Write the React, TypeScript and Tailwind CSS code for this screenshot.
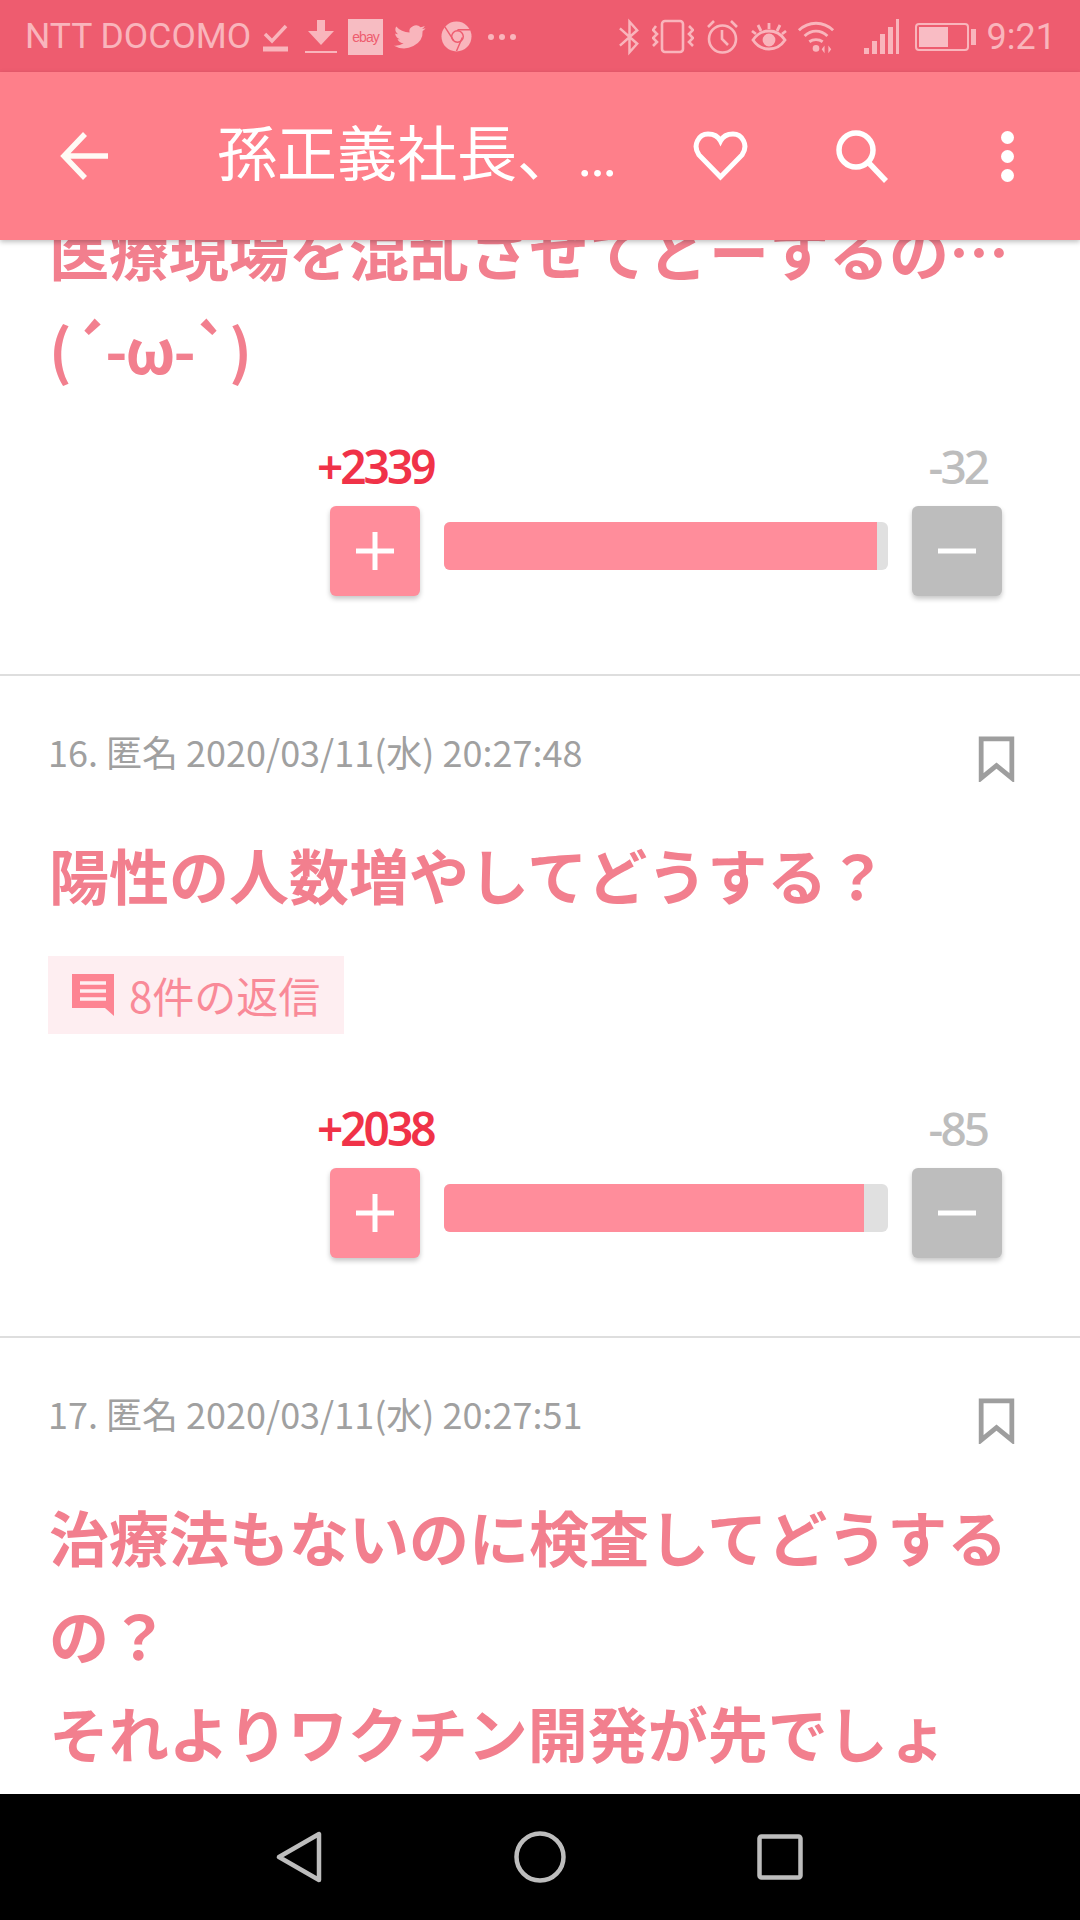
const FONT = "font-['Noto_Sans_CJK_JP','Noto_Sans',sans-serif]";

function StatusBar() {
  return (
    <div className="flex h-[72px] shrink-0 items-center bg-[#ee5c6f] pl-[25px] pr-[24px] pt-[1px] text-[#f9b5bc]">
      <span className="w-[228px] shrink-0 text-[35.5px] leading-none font-['Roboto',sans-serif] whitespace-nowrap">NTT DOCOMO</span>
      <svg width="25" height="32" viewBox="0 0 25 32" className="ml-[10px]" fill="none" stroke="currentColor">
        <path d="M2 13 L9 20 L23 5" strokeWidth="3.500" />
        <path d="M0 28 H25" strokeWidth="5" />
      </svg>
      <svg width="32" height="35" viewBox="0 0 32 35" className="ml-[17px]" fill="currentColor">
        <path d="M12 1 H20 V12 H29 L16 26 L3 12 H12 Z" />
        <rect x="0" y="32" width="32" height="2" />
      </svg>
      <div className="ml-[11px] flex h-[36px] w-[35px] items-center justify-center overflow-hidden bg-[#f7bcc2] text-[14px] leading-none tracking-[-1px] text-[#ee5c6f] font-['Liberation_Sans',sans-serif]">ebay</div>
      <svg width="34" height="30" viewBox="0 0 24 24" className="ml-[10px]" fill="currentColor" preserveAspectRatio="none">
        <path d="M23 4.9c-.8.4-1.700.6-2.600.7.900-.6 1.600-1.400 2-2.500-.9.5-1.900.9-2.900 1.100A4.600 4.600 0 0 0 11.700 8.400C7.900 8.200 4.500 6.400 2.300 3.600c-1.200 2.100-.6 4.800 1.400 6.100-.7 0-1.400-.2-2.100-.6 0 2.200 1.600 4.100 3.700 4.600-.7.2-1.400.2-2.100.1.600 1.800 2.300 3.100 4.300 3.200A9.300 9.300 0 0 1 .7 18.900 13.100 13.100 0 0 0 20.900 7.200c.9-.6 1.600-1.400 2.100-2.300z" />
      </svg>
      <svg width="31" height="31" viewBox="0 0 32 32" className="ml-[14px]">
        <circle cx="16" cy="16" r="15.500" fill="#f9b5bc" />
        <circle cx="17" cy="16" r="6" fill="none" stroke="#ee5c6f" strokeWidth="1.500" />
        <path d="M4 6 L13 20 M17 9 H30 M22 17 L16 31" stroke="#ee5c6f" strokeWidth="1.500" fill="none" />
      </svg>
      <div className="ml-[16px] flex gap-[5px]">
        <span className="size-[6px] rounded-full bg-current" />
        <span className="size-[6px] rounded-full bg-current" />
        <span className="size-[6px] rounded-full bg-current" />
      </div>

      <svg width="23" height="38" viewBox="0 0 24 38" fill="none" stroke="currentColor" strokeWidth="2.600" className="ml-auto">
        <path d="M2 10 L20 26 L12 35 V3 L20 12 L2 28" />
      </svg>
      <svg width="42" height="35" viewBox="0 0 42 35" fill="none" stroke="currentColor" strokeWidth="2.600" className="ml-[11px]">
        <rect x="10" y="2" width="21" height="31" rx="3" />
        <path d="M4 7 L1 11 L5 15 L1 19 L5 23 L1 27 M37 7 L41 11 L37 15 L41 19 L37 23 L41 27" />
      </svg>
      <svg width="33" height="35" viewBox="0 0 33 35" fill="none" stroke="currentColor" strokeWidth="2.600" className="ml-[12px]">
        <circle cx="16.500" cy="20" r="13.500" />
        <path d="M16 11 V20 L22 26 M2 8 L8 2 M31 8 L25 2" />
      </svg>
      <svg width="36" height="34" viewBox="0 0 36 34" fill="none" stroke="currentColor" strokeWidth="2.800" className="ml-[12px]">
        <path d="M2 20 C10 8 26 8 34 20 C26 32 10 32 2 20 Z" />
        <circle cx="18" cy="20" r="5" fill="currentColor" />
        <path d="M18 3 V9 M7 5 L10 11 M29 5 L26 11 M1 11 L5 14 M35 11 L31 14" />
      </svg>
      <svg width="38" height="36" viewBox="0 0 40 36" fill="none" stroke="currentColor" strokeWidth="3" className="ml-[10px]">
        <path d="M2 11 C12 1 28 1 38 11 M8 17 C15 10 25 10 32 17 M13 23 C17 20 23 20 27 23" />
        <circle cx="20" cy="30" r="3.500" fill="currentColor" stroke="none" />
        <path d="M29 27 L26 31 L29 35 Z M33 27 L36 31 L33 35 Z" fill="currentColor" stroke="none" />
      </svg>
      <div className="ml-[29px] flex h-[35px] w-[36px] items-end gap-[3px]">
        <span className="h-[6px] w-[5px] bg-current" />
        <span className="h-[13px] w-[5px] bg-current" />
        <span className="h-[20px] w-[5px] bg-current" />
        <span className="h-[27px] w-[5px] bg-current" />
        <span className="h-[35px] w-[3px] bg-current" />
      </div>
      <div className="ml-[15px] flex h-[28px] w-[54px] rounded-[4px] border-2 border-current p-[2px]">
        <div className="h-full w-[29px] bg-[#f9bcc4]" />
      </div>
      <div className="ml-[2px] h-[16px] w-[5px] bg-current" />
      <span className="ml-[11px] text-[36px] leading-none font-['Roboto',sans-serif]">9:21</span>
    </div>
  );
}

function AppBar() {
  return (
    <div className="z-10 flex h-[168px] shrink-0 items-center bg-[#fe7f8a] text-[#fff] shadow-[0_2px_5px_rgba(0,0,0,0.25)]">
      <svg width="48" height="50" viewBox="0 0 48 50" fill="none" stroke="#fffaf5" strokeWidth="5.500" className="ml-[60px]">
        <path d="M48 25 H4 M25 3 L4 25 L25 47" />
      </svg>
      <span className="ml-[109px] w-[397px] whitespace-nowrap text-[60px] leading-none font-['Roboto','Noto_Sans_CJK_JP',sans-serif]">孫正義社長、…</span>
      <svg width="55" height="50" viewBox="0 0 55 50" fill="none" stroke="#fff" strokeWidth="5" className="ml-[79px]">
        <path d="M27.500 46 L6 24 C-1 14 6 3 15 3 C20 3 25 5 27.500 10 C30 5 35 3 40 3 C49 3 56 14 49 24 Z" />
      </svg>
      <svg width="52" height="53" viewBox="0 0 52 53" fill="none" stroke="#fff" strokeWidth="5.500" className="ml-[88px]">
        <circle cx="20" cy="20" r="17" />
        <path d="M32 32 L50 51" />
      </svg>
      <div className="ml-[113px] flex flex-col gap-[6px]">
        <span className="size-[13px] rounded-full bg-[#fff]" />
        <span className="size-[13px] rounded-full bg-[#fff]" />
        <span className="size-[13px] rounded-full bg-[#fff]" />
      </div>
    </div>
  );
}

function Votes({ plus, minus, pct }: { plus: string; minus: string; pct: number }) {
  return (
    <div className="pl-[330px] pr-[78px] pb-[78px]">
      <div className="relative flex h-[56px] justify-between text-[46px] leading-[56px] font-['Noto_Sans',sans-serif] tracking-[-3px]">
        <span className="absolute left-[-13px] font-semibold text-[#f03248]">{plus}</span>
        <span className="absolute right-[15px] font-medium text-[#bdbdbd]">{minus}</span>
      </div>
      <div className="mt-[12px] flex items-start">
        <div className="flex h-[90px] w-[90px] shrink-0 items-center justify-center rounded-[6px] bg-[#ff8d9b] shadow-[0_3px_5px_rgba(0,0,0,0.22)]">
          <svg width="38" height="38" viewBox="0 0 38 38" stroke="#fff" strokeWidth="5"><path d="M19 0 V38 M0 19 H38" /></svg>
        </div>
        <div className="mx-[24px] mt-[16px] h-[48px] flex-1 overflow-hidden rounded-[6px] bg-[#e0e0e0]">
          <div className="h-full bg-[#ff8d9b]" style={{ width: `${pct}%` }} />
        </div>
        <div className="flex h-[90px] w-[90px] shrink-0 items-center justify-center rounded-[6px] bg-[#bdbdbd] shadow-[0_3px_5px_rgba(0,0,0,0.22)]">
          <svg width="38" height="38" viewBox="0 0 38 38" stroke="#fff" strokeWidth="5"><path d="M0 19 H38" /></svg>
        </div>
      </div>
    </div>
  );
}

function Meta({ text }: { text: string }) {
  return (
    <div className="flex h-[62px] items-center justify-between pl-[48px] pr-[65px]">
      <span className={`text-[36px] leading-none text-[#a0a0a0] ${FONT}`}>{text}</span>
      <svg width="37" height="46" viewBox="0 0 38 48" fill="none" stroke="#9e9e9e" strokeWidth="5" className="mt-[16px]">
        <path d="M3 3 H35 V44 L19 31 L3 44 Z" />
      </svg>
    </div>
  );
}

function Heading({ lines }: { lines: string[] }) {
  return (
    <div className={`pl-[49px] text-[60px] leading-[98px] font-bold text-[#f27f8e] ${FONT}`}>
      {lines.map((l) => (
        <div key={l} className="whitespace-nowrap">{l}</div>
      ))}
    </div>
  );
}

export default function App() {
  return (
    <div className="flex h-[1920px] w-[1080px] flex-col overflow-hidden bg-white">
      <StatusBar />
      <AppBar />
      <main className="min-h-0 flex-1 overflow-hidden">
        <div className="mt-[-39px]">
          <Heading lines={["医療現場を混乱させてどーするの…"]} />
          <div className={`pl-[49px] text-[60px] leading-[98px] font-bold tracking-[-2px] text-[#f27f8e] ${FONT}`}>(´-ω-`)</div>
        </div>
        <div className="mt-[41px]">
          <Votes plus="+2339" minus="-32" pct={97.500} />
        </div>
        <div className="h-[2px] bg-[#dedede]" />
        <div className="pt-[44px]">
          <Meta text="16. 匿名 2020/03/11(水) 20:27:48" />
          <div className="mt-[43px]">
            <Heading lines={["陽性の人数増やしてどうする？"]} />
          </div>
          <div className="ml-[48px] mt-[33px] flex h-[78px] w-[296px] items-center bg-[#feeef1] pl-[24px]">
            <svg width="42" height="42" viewBox="0 0 42 42" className="shrink-0">
              <path d="M0 0 H42 V42 L33 34 H0 Z" fill="#fd8492" />
              <path d="M8 9 H34 M8 17 H34 M8 25 H34" stroke="#feeef1" strokeWidth="3.500" />
            </svg>
            <span className={`ml-[15px] text-[42px] leading-none text-[#f98a98] ${FONT}`}>8件の返信</span>
          </div>
          <div className="mt-[66px]">
            <Votes plus="+2038" minus="-85" pct={94.500} />
          </div>
        </div>
        <div className="h-[2px] bg-[#dedede]" />
        <div className="pt-[44px]">
          <Meta text="17. 匿名 2020/03/11(水) 20:27:51" />
          <div className="mt-[43px]">
            <Heading lines={["治療法もないのに検査してどうする", "の？", "それよりワクチン開発が先でしょ"]} />
          </div>
        </div>
      </main>
      <nav className="flex h-[126px] shrink-0 items-center bg-black pl-[276px] text-[#bdbdbd]">
        <svg width="46" height="52" viewBox="0 0 46 52" fill="none" stroke="currentColor" strokeWidth="4.500" strokeLinejoin="round">
          <path d="M43 3 V49 L3 26 Z" />
        </svg>
        <svg width="52" height="52" viewBox="0 0 52 52" fill="none" stroke="currentColor" strokeWidth="4.500" className="ml-[192px]">
          <circle cx="26" cy="26" r="23.500" />
        </svg>
        <svg width="46" height="46" viewBox="0 0 46 46" fill="none" stroke="currentColor" strokeWidth="4.500" strokeLinejoin="round" className="ml-[191px]">
          <rect x="2.500" y="2.500" width="41" height="41" rx="2" />
        </svg>
      </nav>
    </div>
  );
}
